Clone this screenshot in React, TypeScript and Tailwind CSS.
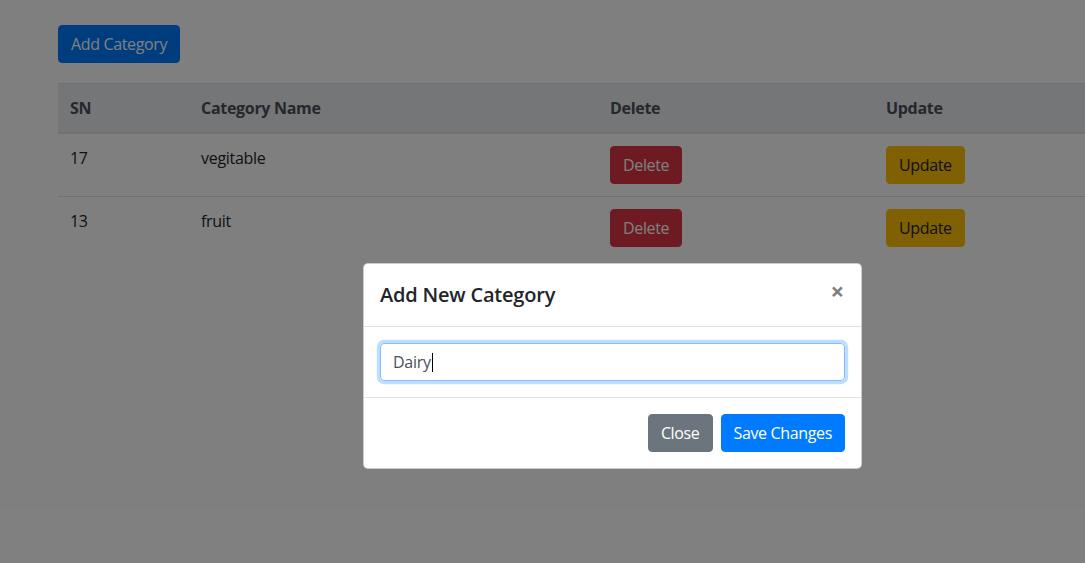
const rows = [
  { sn: 17, name: "vegitable" },
  { sn: 13, name: "fruit" },
];

function Btn({ className, children }: { className: string; children: React.ReactNode }) {
  return (
    <button
      className={`inline-block h-[38px] rounded-[4px] border px-3 text-[16px] leading-6 tracking-[-0.35px] ${className}`}
    >
      {children}
    </button>
  );
}

export default function App() {
  return (
    <div
      className="relative h-[563px] w-[1085px] overflow-hidden bg-white text-[16px] leading-6 tracking-[-0.3px] text-[#212529]"
      style={{ fontFamily: '"Segoe UI", "Open Sans", "Noto Sans", sans-serif' }}
    >
      <div className="w-[1226px] px-[58px] pt-[25px]">
        <Btn className="border-[#007bff] bg-[#007bff] text-white">Add Category</Btn>

        <table className="mt-[20px] w-[1110px] table-fixed border-collapse text-left">
          <thead>
            <tr className="bg-[#e9ecef] text-[#495057]">
              <th className="w-[131px] border-t border-b-2 border-[#dee2e6] p-3 align-bottom font-bold">SN</th>
              <th className="w-[409px] border-t border-b-2 border-[#dee2e6] p-3 align-bottom font-bold">Category Name</th>
              <th className="w-[276px] border-t border-b-2 border-[#dee2e6] p-3 align-bottom font-bold">Delete</th>
              <th className="border-t border-b-2 border-[#dee2e6] p-3 align-bottom font-bold">Update</th>
            </tr>
          </thead>
          <tbody>
            {rows.map((r) => (
              <tr key={r.sn}>
                <td className="border-t border-[#dee2e6] p-3 align-top">{r.sn}</td>
                <td className="border-t border-[#dee2e6] p-3 align-top">{r.name}</td>
                <td className="border-t border-[#dee2e6] p-3 align-top">
                  <Btn className="border-[#dc3545] bg-[#dc3545] text-white">Delete</Btn>
                </td>
                <td className="border-t border-[#dee2e6] p-3 align-top">
                  <Btn className="border-[#ffc107] bg-[#ffc107] text-[#212529]">Update</Btn>
                </td>
              </tr>
            ))}
          </tbody>
        </table>
      </div>

      {/* backdrop */}
      <div className="absolute inset-0 bg-black/50" />

      {/* modal */}
      <div className="absolute left-[363px] top-[263px] w-[499px] rounded-[5px] border border-black/20 bg-white">
        <div className="flex items-start justify-between border-b border-[#dee2e6] p-4">
          <h5 className="text-[20px] font-semibold leading-[30px] tracking-[-0.2px]">Add New Category</h5>
          <button className="-my-1 mr-[1px] text-[24px] font-bold leading-[30px] text-black opacity-50">×</button>
        </div>
        <div className="p-4">
          <div className="flex h-[38px] w-full items-center rounded-[4px] border border-[#80bdff] px-3 text-[#495057] shadow-[0_0_0_3.2px_rgba(0,123,255,0.25)]">
            Dairy<span className="ml-px inline-block h-[19px] w-px bg-black" />
          </div>
        </div>
        <div className="flex justify-end gap-2 border-t border-[#dee2e6] p-4">
          <Btn className="border-[#6c757d] bg-[#6c757d] text-white">Close</Btn>
          <Btn className="border-[#007bff] bg-[#007bff] text-white">Save Changes</Btn>
        </div>
      </div>
    </div>
  );
}
